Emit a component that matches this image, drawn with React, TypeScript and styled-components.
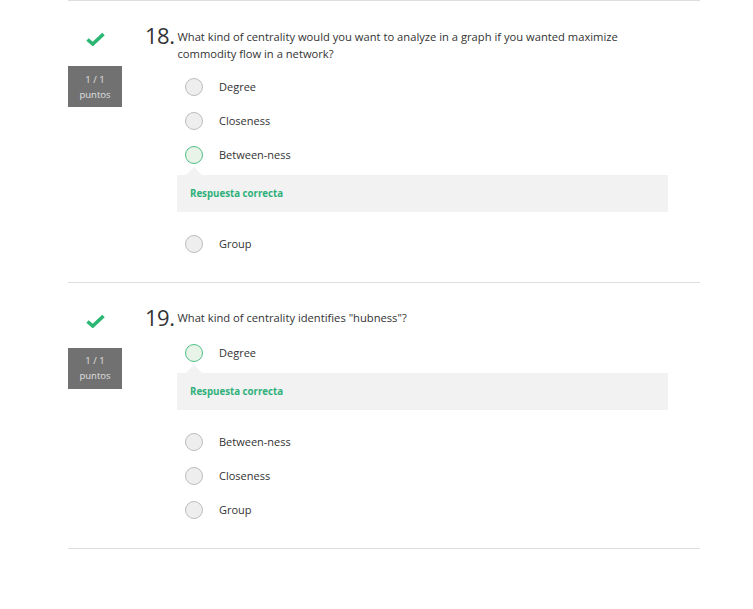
import styled, { createGlobalStyle } from 'styled-components'

const GlobalStyle = createGlobalStyle`
  body {
    margin: 0;
    background: #fff;
    font-family: 'Open Sans', 'Liberation Sans', sans-serif;
    color: #333;
  }
`

const Page = styled.div`
  width: 632px;
  margin-left: 68px;
`

const QuestionBlock = styled.section`
  display: flex;
  gap: 23px;
  border-top: 1px solid #dddddd;
  padding: 23px 0 21px;
  &:last-child {
    border-bottom: 1px solid #dddddd;
  }
`

const Side = styled.div`
  width: 54px;
  display: flex;
  flex-direction: column;
  align-items: center;
  padding-top: 8px;
`

const CheckMark = styled.svg`
  width: 19px;
  height: 14px;
`

const Points = styled.div`
  margin-top: 20px;
  width: 54px;
  height: 41px;
  background: #717171;
  color: #e0e0e0;
  font-size: 9.5px;
  line-height: 15px;
  display: flex;
  flex-direction: column;
  align-items: center;
  justify-content: center;
`

const Body = styled.div`
  flex: 1;
`

const Header = styled.div`
  display: flex;
  align-items: flex-start;
  margin-bottom: 8px;
`

const Number = styled.span`
  font-size: 22px;
  line-height: 22px;
  font-weight: 400;
  color: #333;
  margin-right: 3px;
  letter-spacing: -0.5px;
`

const QuestionText = styled.p`
  margin: 0;
  padding-top: 3.5px;
  font-size: 11.2px;
  line-height: 17px;
  color: #333;
  max-width: 470px;
`

const Answers = styled.div`
  margin: 0 32px;
`

const AnswerRow = styled.div`
  height: 34px;
  display: flex;
  align-items: center;
  gap: 16px;
  padding-left: 8px;
  font-size: 11px;
  color: #333;
`

const Radio = styled.span<{ $checked?: boolean }>`
  width: 16px;
  height: 16px;
  border-radius: 50%;
  border: 1px solid ${({ $checked }) => ($checked ? '#4fbf86' : '#bdbdbd')};
  background: ${({ $checked }) => ($checked ? '#e8f4e8' : '#eeeeee')};
  flex-shrink: 0;
`

const Feedback = styled.div`
  position: relative;
  margin: 3px 0 15px;
  height: 37px;
  background: #f2f2f2;
  display: flex;
  align-items: center;
  padding-left: 13px;
  font-size: 9.7px;
  font-weight: 700;
  color: #2fb07a;
  &::before {
    content: '';
    position: absolute;
    left: 9px;
    top: -8px;
    border-left: 8px solid transparent;
    border-right: 8px solid transparent;
    border-bottom: 8px solid #f2f2f2;
  }
`

type Question = {
  number: number
  text: string
  options: string[]
  correct: number
}

const QUESTIONS: Question[] = [
  {
    number: 18,
    text: 'What kind of centrality would you want to analyze in a graph if you wanted maximize commodity flow in a network?',
    options: ['Degree', 'Closeness', 'Between-ness', 'Group'],
    correct: 2,
  },
  {
    number: 19,
    text: 'What kind of centrality identifies "hubness"?',
    options: ['Degree', 'Between-ness', 'Closeness', 'Group'],
    correct: 0,
  },
]

const Check = () => (
  <CheckMark viewBox="0 0 19 14">
    <path d="M1.5 7.5 L6.8 12 L17.5 2" fill="none" stroke="#2bb673" strokeWidth="3.6" />
  </CheckMark>
)

export default function App() {
  return (
    <>
      <GlobalStyle />
      <Page>
        {QUESTIONS.map((q) => (
          <QuestionBlock key={q.number}>
            <Side>
              <Check />
              <Points>
                <span>1 / 1</span>
                <span>puntos</span>
              </Points>
            </Side>
            <Body>
              <Header>
                <Number>{q.number}.</Number>
                <QuestionText>{q.text}</QuestionText>
              </Header>
              <Answers>
                {q.options.map((opt, i) => (
                  <div key={opt}>
                    <AnswerRow>
                      <Radio $checked={i === q.correct} />
                      <span>{opt}</span>
                    </AnswerRow>
                    {i === q.correct && <Feedback>Respuesta correcta</Feedback>}
                  </div>
                ))}
              </Answers>
            </Body>
          </QuestionBlock>
        ))}
      </Page>
    </>
  )
}
